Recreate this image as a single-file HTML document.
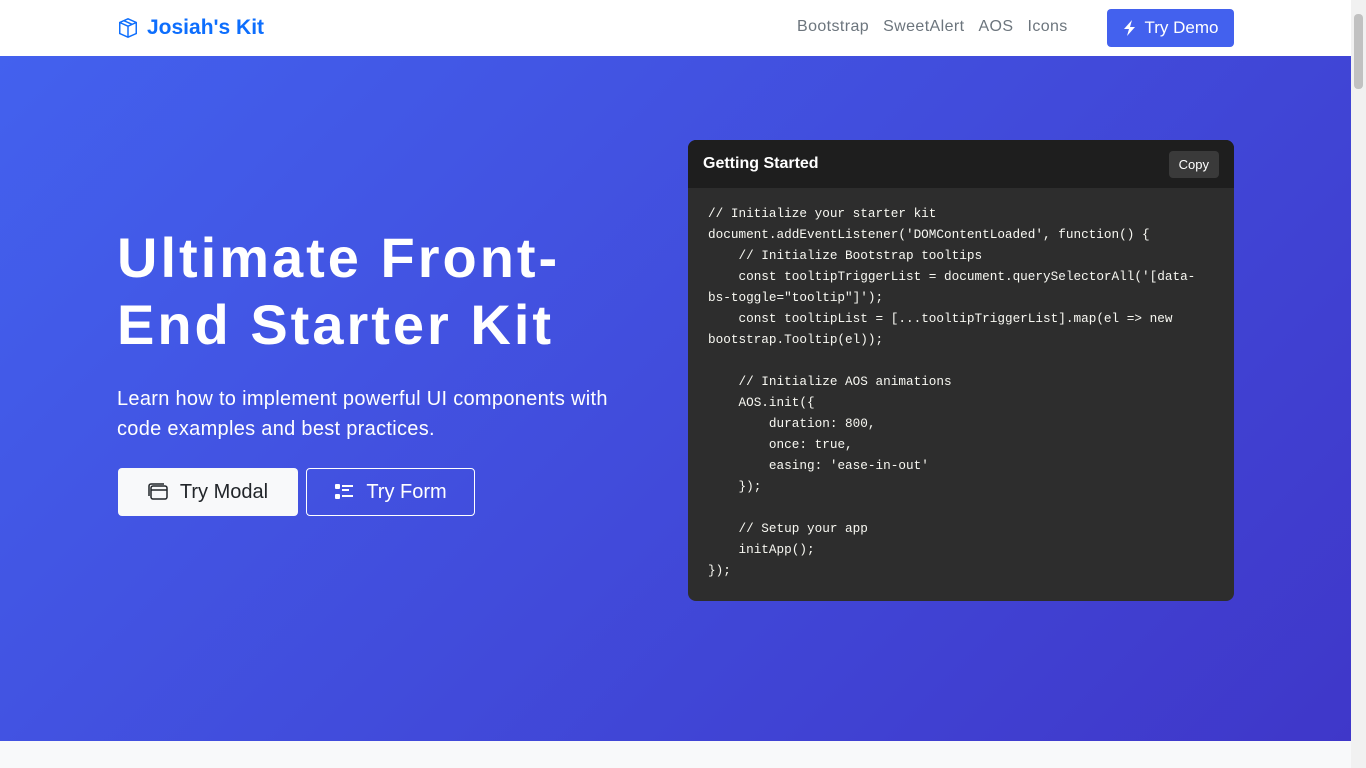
<!DOCTYPE html>
<html><head><meta charset="utf-8"><style>
*{box-sizing:border-box;margin:0;padding:0}
body{width:1366px;height:768px;overflow:hidden;font-family:"Liberation Sans",sans-serif;background:#f8f9fa;position:relative}
.nav{position:absolute;top:0;left:0;width:1351px;height:56px;background:#fff;}
.brand{position:absolute;left:117px;top:16px;color:#0d6efd;font-weight:bold;font-size:21px;display:flex;align-items:center;gap:8px}
.links{position:absolute;left:797px;top:18px;font-size:16px;color:#6c757d;letter-spacing:0.4px}
.links span{margin-right:14px}
.demo{position:absolute;left:1107px;top:9px;width:127px;height:38px;background:#4361ee;color:#fff;border-radius:4px;font-size:17px;display:flex;align-items:center;justify-content:center;gap:8px}
.hero{position:absolute;top:56px;left:0;width:1351px;height:685px;background:linear-gradient(135deg,#4361ee,#3f37c9)}
h1{position:absolute;left:117px;top:168px;color:#fff;font-size:56px;line-height:67px;font-weight:bold;letter-spacing:3px;white-space:nowrap}
.lead{position:absolute;left:117px;top:328px;color:#fff;font-size:20px;line-height:30px;width:580px;letter-spacing:0.3px}
.b1{position:absolute;left:118px;top:412px;width:180px;height:48px;background:#f8f9fa;border-radius:4px;color:#212529;font-size:20px;display:flex;align-items:center;justify-content:center;gap:12px}
.b2{position:absolute;left:306px;top:412px;width:169px;height:48px;border:1px solid #fff;border-radius:4px;color:#fff;font-size:20px;display:flex;align-items:center;justify-content:center;gap:12px}
.card{position:absolute;left:688px;top:84px;width:546px;height:461px;background:#2d2d2d;border-radius:8px;overflow:hidden}
.ch{height:48px;background:#1e1e1e;display:flex;align-items:center;justify-content:space-between;padding:0 15px;color:#fff;font-weight:bold;font-size:16px}
.copy{background:#3a3a3a;color:#fff;font-size:13px;font-weight:normal;padding:6px 10px;border-radius:4px}
pre{padding:15px 20px;color:#f8f8f2;font-family:"Liberation Mono",monospace;font-size:12.7px;line-height:21px;white-space:pre-wrap}
.sb{position:absolute;right:0;top:0;width:15px;height:768px;background:#f1f1f1}
.sb div{position:absolute;left:3px;top:14px;width:9px;height:75px;background:#c1c1c1;border-radius:4px}
</style></head><body>
<div class="nav">
<div class="brand"><svg width="22" height="22" viewBox="0 0 24 24" fill="none" stroke="#0d6efd" stroke-width="1.6"><path d="M12 2l9 4v12l-9 4-9-4V6z"/><path d="M3 6l9 4 9-4M12 10v12M7.5 4l9 4"/></svg>Josiah's Kit</div>
<div class="links"><span>Bootstrap</span><span>SweetAlert</span><span>AOS</span><span>Icons</span></div>
<div class="demo"><svg width="14" height="16" viewBox="0 0 14 16"><path d="M9 0L1 9h5l-2 7 8-9H7z" fill="#fff"/></svg>Try Demo</div>
</div>
<div class="hero">
<h1>Ultimate Front-<br>End Starter Kit</h1>
<div class="lead">Learn how to implement powerful UI components with<br>code examples and best practices.</div>
<div class="b1"><svg width="20" height="18" viewBox="0 0 20 18" fill="none" stroke="#212529" stroke-width="1.5"><rect x="3" y="3" width="16" height="13" rx="2"/><path d="M1 13V3a2 2 0 012-2h13M3 7h16"/></svg>Try Modal</div>
<div class="b2"><svg width="20" height="18" viewBox="0 0 20 18" fill="#fff"><rect x="1" y="1" width="5" height="5" rx="1"/><rect x="1" y="11" width="5" height="5" rx="1"/><rect x="8" y="2" width="11" height="2"/><rect x="8" y="6" width="7" height="2"/><rect x="8" y="12" width="11" height="2"/></svg>Try Form</div>
<div class="card"><div class="ch">Getting Started<span class="copy">Copy</span></div>
<pre>// Initialize your starter kit
document.addEventListener('DOMContentLoaded', function() {
    // Initialize Bootstrap tooltips
    const tooltipTriggerList = document.querySelectorAll('[data-bs-toggle="tooltip"]');
    const tooltipList = [...tooltipTriggerList].map(el =&gt; new bootstrap.Tooltip(el));

    // Initialize AOS animations
    AOS.init({
        duration: 800,
        once: true,
        easing: 'ease-in-out'
    });

    // Setup your app
    initApp();
});</pre></div>
</div>
<div class="sb"><div></div></div>
</body></html>
